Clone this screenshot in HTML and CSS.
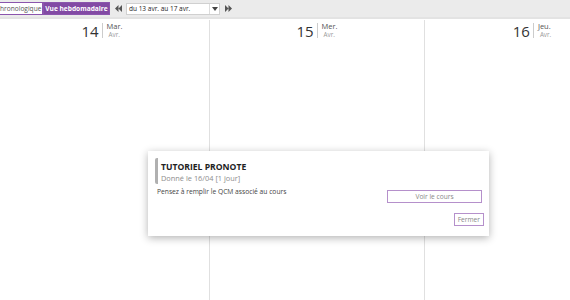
FILE: index.html
```html
<!DOCTYPE html>
<html lang="fr">
<head>
  <meta charset="UTF-8" />
  <title>Cahier de textes</title>
  <link rel="stylesheet" href="styles.css">
</head>
<body>
  <div class="toolbar">
    <div class="views">
      <button class="view first">hronologique</button>
      <button class="view selected">Vue hebdomadaire</button>
    </div>
    <span class="nav">
      <svg width="7" height="7" viewBox="0 0 8 8"><path d="M4 0v8L0 4zM8 0v8L4 4z" fill="#555"/></svg>
    </span>
    <div class="week-select">
      <span>du 13 avr. au 17 avr.</span>
      <span class="arrow"><svg width="6" height="4" viewBox="0 0 6 4"><path d="M0 0h6L3 4z" fill="#444"/></svg></span>
    </div>
    <span class="nav">
      <svg width="7" height="7" viewBox="0 0 8 8"><path d="M0 0v8l4-4zM4 0v8l4-4z" fill="#555"/></svg>
    </span>
  </div>

  <div class="week">
    <div class="day">
      <div class="day-head"><span class="num">14</span><span class="label">Mar.<small>Avr.</small></span></div>
    </div>
    <div class="day">
      <div class="day-head"><span class="num">15</span><span class="label">Mer.<small>Avr.</small></span></div>
    </div>
    <div class="day">
      <div class="day-head"><span class="num">16</span><span class="label">Jeu.<small>Avr.</small></span></div>
    </div>
  </div>

  <div class="popup">
    <div class="popup-head">
      <div class="title">TUTORIEL PRONOTE</div>
      <div class="given">Donné le 16/04 [1 jour]</div>
    </div>
    <div class="popup-row">
      <p class="desc">Pensez à remplir le QCM associé au cours</p>
      <button class="btn wide">Voir le cours</button>
    </div>
    <div class="popup-foot">
      <button class="btn">Fermer</button>
    </div>
  </div>
</body>
</html>
```

FILE: styles.css
```css
body { margin: 0; font-family: "Open Sans", "Noto Sans", sans-serif; background: #fff; overflow: hidden; width: 570px; height: 300px; position: relative; }
button { font-family: inherit; cursor: pointer; white-space: nowrap; }

.toolbar { display: flex; align-items: center; height: 17px; background: #ebebeb; border-bottom: 2px solid #e3e3e3; margin-bottom: 1px; }
.views { display: flex; }
.view { height: 13px; padding: 0; font-size: 6.6px; line-height: 11px; border: 1px solid #8b55ad; background: #fff; color: #555; }
.view.first { border-left: none; width: 43px; text-align: left; }
.view.selected { background: #824aa4; color: #fff; font-weight: 700; width: 67px; text-align: center; }
.nav { display: flex; width: 7px; justify-content: center; margin: 0 4px 0 5px; }
.week-select { display: flex; align-items: center; justify-content: space-between; width: 90px; height: 10px; background: #fff; border: 1px solid #d0d0d0; font-size: 6.5px; color: #222; padding-left: 2px; }
.week-select .arrow { display: flex; align-items: center; justify-content: center; width: 9px; height: 10px; border-left: 1px solid #ddd; }

.week { display: grid; grid-template-columns: repeat(3, 215px); margin-left: -5px; height: 281px; }
.day { border-right: 1px solid #e0e0e0; }
.day-head { display: flex; justify-content: center; padding-top: 2px; }
.num { font-size: 15px; font-weight: 400; color: #333; line-height: 16px; padding: 0 3px 0 0; border-right: 1px solid #ccc; height: 15px; margin-top: 1px; }
.label { display: flex; flex-direction: column; font-size: 7.5px; color: #555; line-height: 8.5px; padding-left: 4px; }
.label small { font-size: 6.3px; color: #999; padding-left: 2px; }

.popup { position: absolute; left: 148px; top: 151px; width: 341px; height: 85px; box-sizing: border-box; background: #fff; box-shadow: 0 2px 8px rgba(0, 0, 0, 0.3); padding: 7px 5px 0 7px; }
.popup-head { border-left: 3px solid #b0b0b0; border-radius: 2px; padding-left: 3px; height: 26px; }
.title { font-size: 8.6px; font-weight: 700; color: #222; line-height: 11px; padding-top: 4px; }
.given { font-size: 7.4px; color: #8d8d8d; line-height: 10px; }
.popup-row { display: flex; justify-content: space-between; align-items: flex-start; }
.desc { margin: 3px 0 0 2px; font-size: 6.7px; color: #444; }
.btn { height: 13px; padding: 0 3px; font-size: 6.6px; line-height: 10px; color: #888; background: #fff; border: 1px solid #b590cb; }
.btn.wide { width: 95px; margin: 6px 2px 0 0; }
.popup-foot { display: flex; justify-content: flex-end; margin-top: 10px; }
```
